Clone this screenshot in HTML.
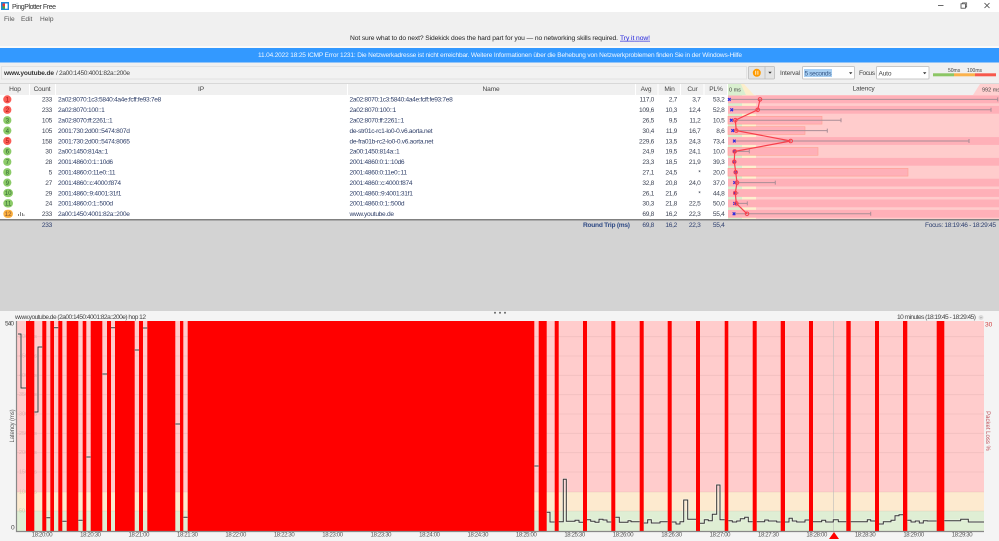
<!DOCTYPE html>
<html><head><meta charset="utf-8"><style>
html,body{margin:0;padding:0;background:#fff;width:999px;height:541px;overflow:hidden}
svg{display:block;filter:blur(.3px)}
text{font-family:"Liberation Sans",sans-serif;font-size:6.6px;fill:#333}
.h{text-anchor:middle;fill:#444;letter-spacing:-.15px}
.r{text-anchor:end;fill:#3f4555;letter-spacing:-.3px}
.ip{fill:#2f3f68;letter-spacing:-.3px}
.t{text-anchor:middle;fill:#555;font-size:6px;letter-spacing:-.35px}
.b{fill:#f00}
.g{fill:#efefef;stroke:#dcdcdc;stroke-width:1}
</style></head><body>
<svg width="999" height="541" viewBox="0 0 999 541" xmlns="http://www.w3.org/2000/svg">
<defs>
<path id="lat" d="M18 334H21V388H26M34.300 412H38V347H42.300M46.300 517.700H50.300M54 327.700H58.300M62.300 521.300H66.700M78.300 520.300H82.700M86.300 457H90.700M102.300 374H107M111 327.700H115M134.700 350H139M143 328H147.300M175.300 424H180M183.300 517.300H187.700M534.300 466H538.700M546.700 512.300H550V522H554.700M558.700 521.700H563.300V479.300H566.300V521.300H575V520.300H579V522.300H583M587 519.700H590.700V521.300H595V522.300H599V519.300H603V520H607V522H611.300M615.300 517.300H619.300V522.300H628V520.700H631V521.700H639.700M643.700 523H647.700V519.700H651.300V523H660V521.700H667.700M671.700 522H676V524H680V521.700H683.700V500H687.700V519.300H696M700 523.300H704.300V519.700H708.300V520.700H712.300V514.300H716.700V485H720V519.700H724.700M728.300 520.700H732.300V522H736.700V521H740.300V518.700H744.700V517.300H748.300V521.700H752.700M756.700 521.700H764.700V520H768.300V521H776.700V522H780.700M785 522H789V518.300H792.300V521H796.700V522H805V520H809M813 521.700H821.700V520.300H825.700V522H833.300V519.700H838.300V521.700H846.300M850.700 521.700H867.300V519.700H870.700V521H875M879 524H883.300V521.700H891V520.300H895V515.700H899V514.700H903M907.300 520.300H911V522H915.300V521H919.300V523H923.300V520.700H927.300V521H936.700M944.300 520.700H960.700V519.300H968.300V522H984"/>
</defs>
<!-- title -->
<rect width="999" height="12" fill="#fff"/>
<rect x="1" y="2" width="8" height="8" fill="#1e88d8"/><rect x="2.500" y="3.500" width="2.500" height="3" fill="#e33"/><rect x="2.500" y="6.300" width="2.500" height="2.400" fill="#4a4"/><rect x="5" y="3.500" width="2.600" height="5.200" fill="#fff"/>
<text x="12" y="9" style="font-size:7px" textLength="44">PingPlotter Free</text>
<path d="M938 5.500h5.500" stroke="#444" stroke-width=".8"/>
<rect x="961" y="3.800" width="4.400" height="4.400" fill="none" stroke="#444" stroke-width=".8"/><path d="M962.500 3.800v-1h4.200v4.200h-1.200" fill="none" stroke="#444" stroke-width=".7"/>
<path d="M984.500 3l5 5M989.500 3l-5 5" stroke="#444" stroke-width=".8"/>
<!-- menu + sidekick -->
<rect y="12" width="999" height="34" fill="#f0f0f0"/>
<text x="4" y="20.800" style="font-size:6.600px;fill:#555">File</text>
<text x="21" y="20.800" style="font-size:6.600px;fill:#555">Edit</text>
<text x="40" y="20.800" style="font-size:6.600px;fill:#555">Help</text>
<text x="350" y="39.800" style="font-size:6.700px;fill:#222" textLength="268">Not sure what to do next? Sidekick does the hard part for you — no networking skills required.</text>
<text x="620" y="39.800" style="font-size:6.700px;fill:#2222dd;text-decoration:underline" textLength="30">Try it now!</text>
<rect y="46" width="999" height="2" fill="#fafafa"/>
<rect y="48" width="999" height="14.500" fill="#3399ff"/>
<text x="258" y="57" style="font-size:6.500px;fill:#f0f7ff" textLength="484">11.04.2022 18:25 ICMP Error 1231: Die Netzwerkadresse ist nicht erreichbar. Weitere Informationen über die Behebung von Netzwerkproblemen finden Sie in der Windows-Hilfe</text>
<rect y="62.500" width="999" height="21" fill="#f0f0f0"/>
<rect x="1.500" y="66.500" width="745" height="12.500" fill="#f2f2f2" stroke="#e2e2e2"/>
<text x="4" y="75.200" style="font-size:6.600px;font-weight:bold;fill:#333" textLength="50">www.youtube.de</text>
<text x="56" y="75.200" style="font-size:6.600px;fill:#444" textLength="74">/ 2a00:1450:4001:82a::200e</text>
<!-- toolbar -->
<rect x="748.500" y="66.500" width="26" height="12.500" rx="1" fill="#e4e4e4" stroke="#bbb" stroke-width=".8"/>
<path d="M765 66.500v12.500" stroke="#bbb" stroke-width=".8"/>
<circle cx="756.800" cy="72.800" r="4" fill="#ff9a00"/><path d="M755.700 70.800v4M757.900 70.800v4" stroke="#fff3d8" stroke-width=".9"/>
<path d="M768.300 71.800h3.400l-1.700 2z" fill="#333"/>
<text x="780" y="75.200" style="fill:#444" textLength="20">Interval</text>
<rect x="802.500" y="66.500" width="52" height="12.500" rx="1" fill="#fff" stroke="#c8c8c8"/>
<rect x="804" y="69" width="28" height="8" fill="#a8d0f4"/>
<text x="804.500" y="75.500" style="fill:#3a5a88" textLength="27">5 seconds</text>
<path d="M849 72.200h3.400l-1.700 2z" fill="#333"/>
<text x="859" y="75.200" style="fill:#444" textLength="16">Focus</text>
<rect x="876.500" y="66.500" width="52.500" height="12.500" rx="1" fill="#fff" stroke="#c8c8c8"/>
<text x="878.500" y="75.500" style="fill:#444" textLength="13">Auto</text>
<path d="M923 72.200h3.400l-1.700 2z" fill="#333"/>
<rect x="933" y="73.300" width="21" height="3" fill="#8cc665"/><rect x="954" y="73.300" width="21" height="3" fill="#fbb24c"/><rect x="975" y="73.300" width="21" height="3" fill="#f7584c"/>
<text x="948" y="72" style="font-size:5px;fill:#444">50ms</text><text x="967" y="72" style="font-size:5px;fill:#444">100ms</text>
<!-- header -->
<rect y="83.500" width="999" height="11.500" fill="#f0f0f0"/>
<rect y="83" width="999" height="1" fill="#d8d8d8"/>
<path d="M29.500 84v11M55.500 84v11M347.500 84v11M635.500 84v11M658 84v11M680.500 84v11M704 84v11M727.500 84v11" stroke="#fff" stroke-width="1"/>
<text class="h" x="15" y="91">Hop</text><text class="h" x="42" y="91">Count</text><text class="h" x="201" y="91">IP</text><text class="h" x="491" y="91">Name</text>
<text class="h" x="646" y="91">Avg</text><text class="h" x="669.500" y="91">Min</text><text class="h" x="692.500" y="91">Cur</text><text class="h" x="716" y="91">PL%</text><text class="h" x="863.500" y="90.500">Latency</text>
<path d="M728 84h13l5 11h-18z" fill="#d9efcf"/><path d="M741 84h3l10 11h-8z" fill="#fdeecb"/><path d="M973 95l7-11h19v11z" fill="#ffd0d0"/>
<text x="729" y="91.500" style="font-size:5.500px;fill:#444">0 ms</text><text x="982" y="91.500" style="font-size:5.500px;fill:#444">992 ms</text>
<!-- table white -->
<rect y="95" width="728" height="124" fill="#fff"/>
<!-- graph -->
<rect x="728" y="95" width="14" height="124" fill="#d8eecd"/><rect x="742" y="95" width="14" height="124" fill="#fdf0cf"/><rect x="756" y="95" width="243" height="124" fill="#ffcccc"/>
<g fill="#ffb0b8">
<rect x="728" y="95.500" width="271" height="7.800"/><rect x="728" y="105.900" width="271" height="7.800"/>
<rect x="728" y="116.300" width="94" height="7.800" stroke="#ffa090" stroke-width=".6"/><rect x="728" y="126.700" width="77" height="7.800" stroke="#ffa090" stroke-width=".6"/>
<rect x="728" y="137.100" width="271" height="7.800"/><rect x="728" y="147.500" width="90" height="7.800" stroke="#ffa090" stroke-width=".6"/>
<rect x="728" y="157.900" width="271" height="7.800"/><rect x="728" y="168.300" width="180" height="7.800" stroke="#ffa090" stroke-width=".6"/>
<rect x="728" y="178.700" width="271" height="7.800"/><rect x="728" y="189.100" width="271" height="7.800"/><rect x="728" y="199.500" width="271" height="7.800"/><rect x="728" y="209.900" width="271" height="7.800"/>
</g>
<g stroke="#aa8d96" stroke-width="1" fill="none">
<path d="M729 99.400H997.700M997.700 97.400v4M732 109.800H991M991 107.800v4M731 120.200H841M841 118.200v4M733 130.600H827.300M827.300 128.600v4M734 141H969M969 139v4M734 151.400H749.300M749.300 149.400v4M735 182.600H775.300M775.300 180.600v4M735 193H738.700M735 203.400H747.300M747.300 201.400v4M734 213.800H870.700M870.700 211.800v4"/>
</g>
<g stroke="#2a2ae0" stroke-width="1.200" fill="none">
<path d="M728 98l2.600 2.800m0-2.800l-2.600 2.800M730.400 108.400l2.600 2.800m0-2.800l-2.600 2.800M730 118.800l2.600 2.800m0-2.800l-2.600 2.800M731.400 129.200l2.600 2.800m0-2.800l-2.600 2.800M733 139.600l2.600 2.800m0-2.800l-2.600 2.800M733 150l2.600 2.800m0-2.800l-2.600 2.800M733 160.400l2.600 2.800m0-2.800l-2.600 2.800M734.400 170.800l2.600 2.800m0-2.800l-2.600 2.800M733.400 181.200l2.600 2.800m0-2.800l-2.600 2.800M733.400 191.600l2.600 2.800m0-2.800l-2.600 2.800M733.400 202l2.600 2.800m0-2.800l-2.600 2.800M732.700 212.400l2.600 2.800m0-2.800l-2.600 2.800"/>
</g>
<polyline points="760,99.400 757.700,109.800 735.300,120.200 736.300,130.600 790.700,141 734.700,151.400 734.300,161.800 735.700,172.200 737,182.600 735.300,193 736.300,203.400 747,213.800" fill="none" stroke="#f7404c" stroke-width="1.200"/>
<g fill="none" stroke="#f7404c" stroke-width="1">
<circle cx="760" cy="99.400" r="1.800"/><circle cx="757.700" cy="109.800" r="1.800"/><circle cx="735.300" cy="120.200" r="1.800"/><circle cx="736.300" cy="130.600" r="1.800"/><circle cx="790.700" cy="141" r="1.800"/><circle cx="734.700" cy="151.400" r="1.800"/><circle cx="734.300" cy="161.800" r="1.800"/><circle cx="735.700" cy="172.200" r="1.800"/><circle cx="737" cy="182.600" r="1.800"/><circle cx="735.300" cy="193" r="1.800"/><circle cx="736.300" cy="203.400" r="1.800"/><circle cx="747" cy="213.800" r="1.800"/>
</g>
<!-- hop badges -->
<g fill="#fb5c55"><circle cx="7.300" cy="99.400" r="4.100"/><circle cx="7.300" cy="109.800" r="4.100"/><circle cx="7.300" cy="141" r="4.100"/></g>
<g fill="#8ccb68"><circle cx="7.300" cy="120.200" r="4.100"/><circle cx="7.300" cy="130.600" r="4.100"/><circle cx="7.300" cy="151.400" r="4.100"/><circle cx="7.300" cy="161.800" r="4.100"/><circle cx="7.300" cy="172.200" r="4.100"/><circle cx="7.300" cy="182.600" r="4.100"/><rect x="3.300" y="188.900" width="9.700" height="8.200" rx="4.100"/><rect x="3.300" y="199.300" width="9.700" height="8.200" rx="4.100"/></g>
<rect x="3.300" y="209.700" width="9.700" height="8.200" rx="4.100" fill="#fbb03f"/>
<path d="M18.500 216v-2M20.500 216v-4M22.500 216v-3M24 216v-1.500" stroke="#777" stroke-width=".9"/>
<g>
<text x="7.300" y="101.600" style="fill:#a11;font-size:6.200px;text-anchor:middle">1</text><text x="7.300" y="112" style="fill:#a11;font-size:6.200px;text-anchor:middle">2</text><text x="7.300" y="122.400" style="fill:#363;font-size:6.200px;text-anchor:middle">3</text><text x="7.300" y="132.800" style="fill:#363;font-size:6.200px;text-anchor:middle">4</text><text x="7.300" y="143.200" style="fill:#a11;font-size:6.200px;text-anchor:middle">5</text><text x="7.300" y="153.600" style="fill:#363;font-size:6.200px;text-anchor:middle">6</text><text x="7.300" y="164" style="fill:#363;font-size:6.200px;text-anchor:middle">7</text><text x="7.300" y="174.400" style="fill:#363;font-size:6.200px;text-anchor:middle">8</text><text x="7.300" y="184.800" style="fill:#363;font-size:6.200px;text-anchor:middle">9</text><text x="8.100" y="195.200" style="fill:#363;font-size:6.200px;text-anchor:middle">10</text><text x="8.100" y="205.600" style="fill:#363;font-size:6.200px;text-anchor:middle">11</text><text x="8.100" y="216" style="fill:#853;font-size:6.200px;text-anchor:middle">12</text>
</g>
<!-- count -->
<g>
<text class="r" x="52" y="101.700">233</text><text class="r" x="52" y="112.100">233</text><text class="r" x="52" y="122.500">105</text><text class="r" x="52" y="132.900">105</text><text class="r" x="52" y="143.300">158</text><text class="r" x="52" y="153.700">30</text><text class="r" x="52" y="164.100">28</text><text class="r" x="52" y="174.500">5</text><text class="r" x="52" y="184.900">27</text><text class="r" x="52" y="195.300">29</text><text class="r" x="52" y="205.700">24</text><text class="r" x="52" y="216.100">233</text>
</g>
<!-- IP -->
<g>
<text class="ip" x="58" y="101.700" textLength="103">2a02:8070:1c3:5840:4a4e:fcff:fe93:7e8</text><text class="ip" x="58" y="112.100">2a02:8070:100::1</text><text class="ip" x="58" y="122.500">2a02:8070:ff:2261::1</text><text class="ip" x="58" y="132.900">2001:730:2d00::5474:807d</text><text class="ip" x="58" y="143.300">2001:730:2d00::5474:8065</text><text class="ip" x="58" y="153.700">2a00:1450:814a::1</text><text class="ip" x="58" y="164.100">2001:4860:0:1::10d6</text><text class="ip" x="58" y="174.500">2001:4860:0:11e0::11</text><text class="ip" x="58" y="184.900">2001:4860::c:4000:f874</text><text class="ip" x="58" y="195.300">2001:4860::9:4001:31f1</text><text class="ip" x="58" y="205.700">2001:4860:0:1::500d</text><text class="ip" x="58" y="216.100">2a00:1450:4001:82a::200e</text>
<text class="ip" x="349.500" y="101.700" textLength="103">2a02:8070:1c3:5840:4a4e:fcff:fe93:7e8</text><text class="ip" x="349.500" y="112.100">2a02:8070:100::1</text><text class="ip" x="349.500" y="122.500">2a02:8070:ff:2261::1</text><text class="ip" x="349.500" y="132.900">de-str01c-rc1-lo0-0.v6.aorta.net</text><text class="ip" x="349.500" y="143.300">de-fra01b-rc2-lo0-0.v6.aorta.net</text><text class="ip" x="349.500" y="153.700">2a00:1450:814a::1</text><text class="ip" x="349.500" y="164.100">2001:4860:0:1::10d6</text><text class="ip" x="349.500" y="174.500">2001:4860:0:11e0::11</text><text class="ip" x="349.500" y="184.900">2001:4860::c:4000:f874</text><text class="ip" x="349.500" y="195.300">2001:4860::9:4001:31f1</text><text class="ip" x="349.500" y="205.700">2001:4860:0:1::500d</text><text class="ip" x="349.500" y="216.100">www.youtube.de</text>
</g>
<!-- numbers -->
<g>
<text class="r" x="654" y="101.700">117,0</text><text class="r" x="677" y="101.700">2,7</text><text class="r" x="700.500" y="101.700">3,7</text><text class="r" x="724.500" y="101.700">53,2</text>
<text class="r" x="654" y="112.100">109,6</text><text class="r" x="677" y="112.100">10,3</text><text class="r" x="700.500" y="112.100">12,4</text><text class="r" x="724.500" y="112.100">52,8</text>
<text class="r" x="654" y="122.500">26,5</text><text class="r" x="677" y="122.500">9,5</text><text class="r" x="700.500" y="122.500">11,2</text><text class="r" x="724.500" y="122.500">10,5</text>
<text class="r" x="654" y="132.900">30,4</text><text class="r" x="677" y="132.900">11,9</text><text class="r" x="700.500" y="132.900">16,7</text><text class="r" x="724.500" y="132.900">8,6</text>
<text class="r" x="654" y="143.300">229,6</text><text class="r" x="677" y="143.300">13,5</text><text class="r" x="700.500" y="143.300">24,3</text><text class="r" x="724.500" y="143.300">73,4</text>
<text class="r" x="654" y="153.700">24,9</text><text class="r" x="677" y="153.700">19,5</text><text class="r" x="700.500" y="153.700">24,1</text><text class="r" x="724.500" y="153.700">10,0</text>
<text class="r" x="654" y="164.100">23,3</text><text class="r" x="677" y="164.100">18,5</text><text class="r" x="700.500" y="164.100">21,9</text><text class="r" x="724.500" y="164.100">39,3</text>
<text class="r" x="654" y="174.500">27,1</text><text class="r" x="677" y="174.500">24,5</text><text class="r" x="700.500" y="174.500">*</text><text class="r" x="724.500" y="174.500">20,0</text>
<text class="r" x="654" y="184.900">32,8</text><text class="r" x="677" y="184.900">20,8</text><text class="r" x="700.500" y="184.900">24,0</text><text class="r" x="724.500" y="184.900">37,0</text>
<text class="r" x="654" y="195.300">26,1</text><text class="r" x="677" y="195.300">21,6</text><text class="r" x="700.500" y="195.300">*</text><text class="r" x="724.500" y="195.300">44,8</text>
<text class="r" x="654" y="205.700">30,3</text><text class="r" x="677" y="205.700">21,8</text><text class="r" x="700.500" y="205.700">22,5</text><text class="r" x="724.500" y="205.700">50,0</text>
<text class="r" x="654" y="216.100">69,8</text><text class="r" x="677" y="216.100">16,2</text><text class="r" x="700.500" y="216.100">22,3</text><text class="r" x="724.500" y="216.100">55,4</text>
</g>
<!-- summary -->
<rect y="219" width="999" height="92" fill="#d3d3d3"/>
<rect y="219" width="999" height="1.500" fill="#808080"/>
<text class="r" x="52" y="226.800" style="fill:#2f4070">233</text>
<text x="583" y="226.800" style="font-weight:bold;fill:#2f4a85" textLength="47">Round Trip (ms)</text>
<text class="r" x="654" y="226.800" style="fill:#2f4070">69,8</text><text class="r" x="677" y="226.800" style="fill:#2f4070">16,2</text><text class="r" x="700.500" y="226.800" style="fill:#2f4070">22,3</text><text class="r" x="724.500" y="226.800" style="fill:#2f4070">55,4</text>
<text x="925" y="226.800" style="fill:#2f4070" textLength="71">Focus: 18:19:46 - 18:29:45</text>
<!-- lower -->
<rect y="311" width="999" height="230" fill="#f4f4f4"/>
<circle cx="495" cy="312.700" r="1" fill="#666"/><circle cx="500" cy="312.700" r="1" fill="#666"/><circle cx="505" cy="312.700" r="1" fill="#666"/>
<text x="15" y="319" style="fill:#444" textLength="131">www.youtube.de (2a00:1450:4001:82a::200e) hop 12</text>
<text x="897" y="319" style="fill:#444" textLength="79">10 minutes (18:19:45 - 18:29:45)</text>
<circle cx="981" cy="317.500" r="2.500" fill="#ddd"/><path d="M979.800 317l1.200 1.200 1.200-1.200" fill="none" stroke="#888" stroke-width=".5"/>
<rect x="17" y="321" width="967" height="171" fill="#ffcccc"/><rect x="17" y="492" width="967" height="19" fill="#fdeacf"/><rect x="17" y="511" width="967" height="20" fill="#dfeed4"/>
<path d="M17 336.700H984M17 356H984M17 375.300H984M17 394.700H984M17 414H984M17 433.300H984M17 452.700H984M17 472H984M17 492H984M17 511H984" stroke="#b08888" stroke-opacity=".18" stroke-width=".8"/>
<path d="M833.300 321V531" stroke="#bbb" stroke-width=".6"/>
<g><text x="19" y="338" style="font-size:5.500px;fill:#e0b0b0">500 ms</text><text x="19" y="357.500" style="font-size:5.500px;fill:#e0b0b0">450 ms</text><text x="19" y="377" style="font-size:5.500px;fill:#e0b0b0">400 ms</text><text x="19" y="396" style="font-size:5.500px;fill:#e0b0b0">350 ms</text><text x="19" y="415.500" style="font-size:5.500px;fill:#e0b0b0">300 ms</text><text x="19" y="435" style="font-size:5.500px;fill:#e0b0b0">250 ms</text><text x="19" y="454" style="font-size:5.500px;fill:#e0b0b0">200 ms</text><text x="19" y="473.500" style="font-size:5.500px;fill:#e0b0b0">150 ms</text><text x="19" y="493.500" style="font-size:5.500px;fill:#d8c8a8">100 ms</text><text x="19" y="512.500" style="font-size:5.500px;fill:#c0d0b0">50 ms</text></g>
<!-- red bars -->
<g fill="#f00">
<rect x="26" y="321" width="8.300" height="210"/><rect x="42.300" y="321" width="4" height="210"/><rect x="50.300" y="321" width="3.700" height="210"/><rect x="58.300" y="321" width="4" height="210"/><rect x="66.700" y="321" width="11.600" height="210"/><rect x="82.700" y="321" width="3.600" height="210"/><rect x="90.700" y="321" width="11.600" height="210"/><rect x="107" y="321" width="4" height="210"/><rect x="115" y="321" width="19.700" height="210"/><rect x="139" y="321" width="4" height="210"/><rect x="147.300" y="321" width="28" height="210"/><rect x="180" y="321" width="3.300" height="210"/><rect x="187.700" y="321" width="346.600" height="210"/><rect x="538.700" y="321" width="8" height="210"/><rect x="554.700" y="321" width="4" height="210"/><rect x="583" y="321" width="4" height="210"/><rect x="611.300" y="321" width="4" height="210"/><rect x="639.700" y="321" width="4" height="210"/><rect x="667.700" y="321" width="4" height="210"/><rect x="696" y="321" width="4" height="210"/><rect x="724.700" y="321" width="3.600" height="210"/><rect x="752.700" y="321" width="4" height="210"/><rect x="780.700" y="321" width="4.300" height="210"/><rect x="809" y="321" width="4" height="210"/><rect x="846.300" y="321" width="4.400" height="210"/><rect x="875" y="321" width="4" height="210"/><rect x="903" y="321" width="4.300" height="210"/><rect x="936.700" y="321" width="7.600" height="210"/>
</g>
<!-- latency line -->
<use href="#lat" fill="none" stroke="#fff" stroke-opacity=".55" stroke-width="2.200"/>
<use href="#lat" fill="none" stroke="#333" stroke-width="1"/>
<!-- axes -->
<path d="M16.500 321V531.500H984" fill="none" stroke="#888" stroke-width="1.200"/>
<text x="5" y="325.500" style="fill:#444" textLength="9">540</text><text x="11" y="529.500" style="fill:#444">0</text>
<text x="0" y="0" transform="translate(14 426) rotate(-90)" style="text-anchor:middle;fill:#555;font-size:6px;letter-spacing:-.15px">Latency (ms)</text>
<text x="985" y="326.500" style="fill:#d04040">30</text>
<text x="0" y="0" transform="translate(986 431) rotate(90)" style="text-anchor:middle;fill:#c05058;font-size:6px">Packet Loss %</text>
<path d="M829 539L834 532L839 539Z" fill="#f00"/>
<!-- ticks -->
<text class="t" x="42" y="536.300">18:20:00</text><text class="t" x="90.400" y="536.300">18:20:30</text><text class="t" x="138.800" y="536.300">18:21:00</text><text class="t" x="187.300" y="536.300">18:21:30</text><text class="t" x="235.700" y="536.300">18:22:00</text><text class="t" x="284.100" y="536.300">18:22:30</text><text class="t" x="332.500" y="536.300">18:23:00</text><text class="t" x="380.900" y="536.300">18:23:30</text><text class="t" x="429.400" y="536.300">18:24:00</text><text class="t" x="477.800" y="536.300">18:24:30</text><text class="t" x="526.200" y="536.300">18:25:00</text><text class="t" x="574.600" y="536.300">18:25:30</text><text class="t" x="623" y="536.300">18:26:00</text><text class="t" x="671.500" y="536.300">18:26:30</text><text class="t" x="719.900" y="536.300">18:27:00</text><text class="t" x="768.300" y="536.300">18:27:30</text><text class="t" x="816.700" y="536.300">18:28:00</text><text class="t" x="865.100" y="536.300">18:28:30</text><text class="t" x="913.600" y="536.300">18:29:00</text><text class="t" x="962" y="536.300">18:29:30</text>
</svg>
</body></html>
